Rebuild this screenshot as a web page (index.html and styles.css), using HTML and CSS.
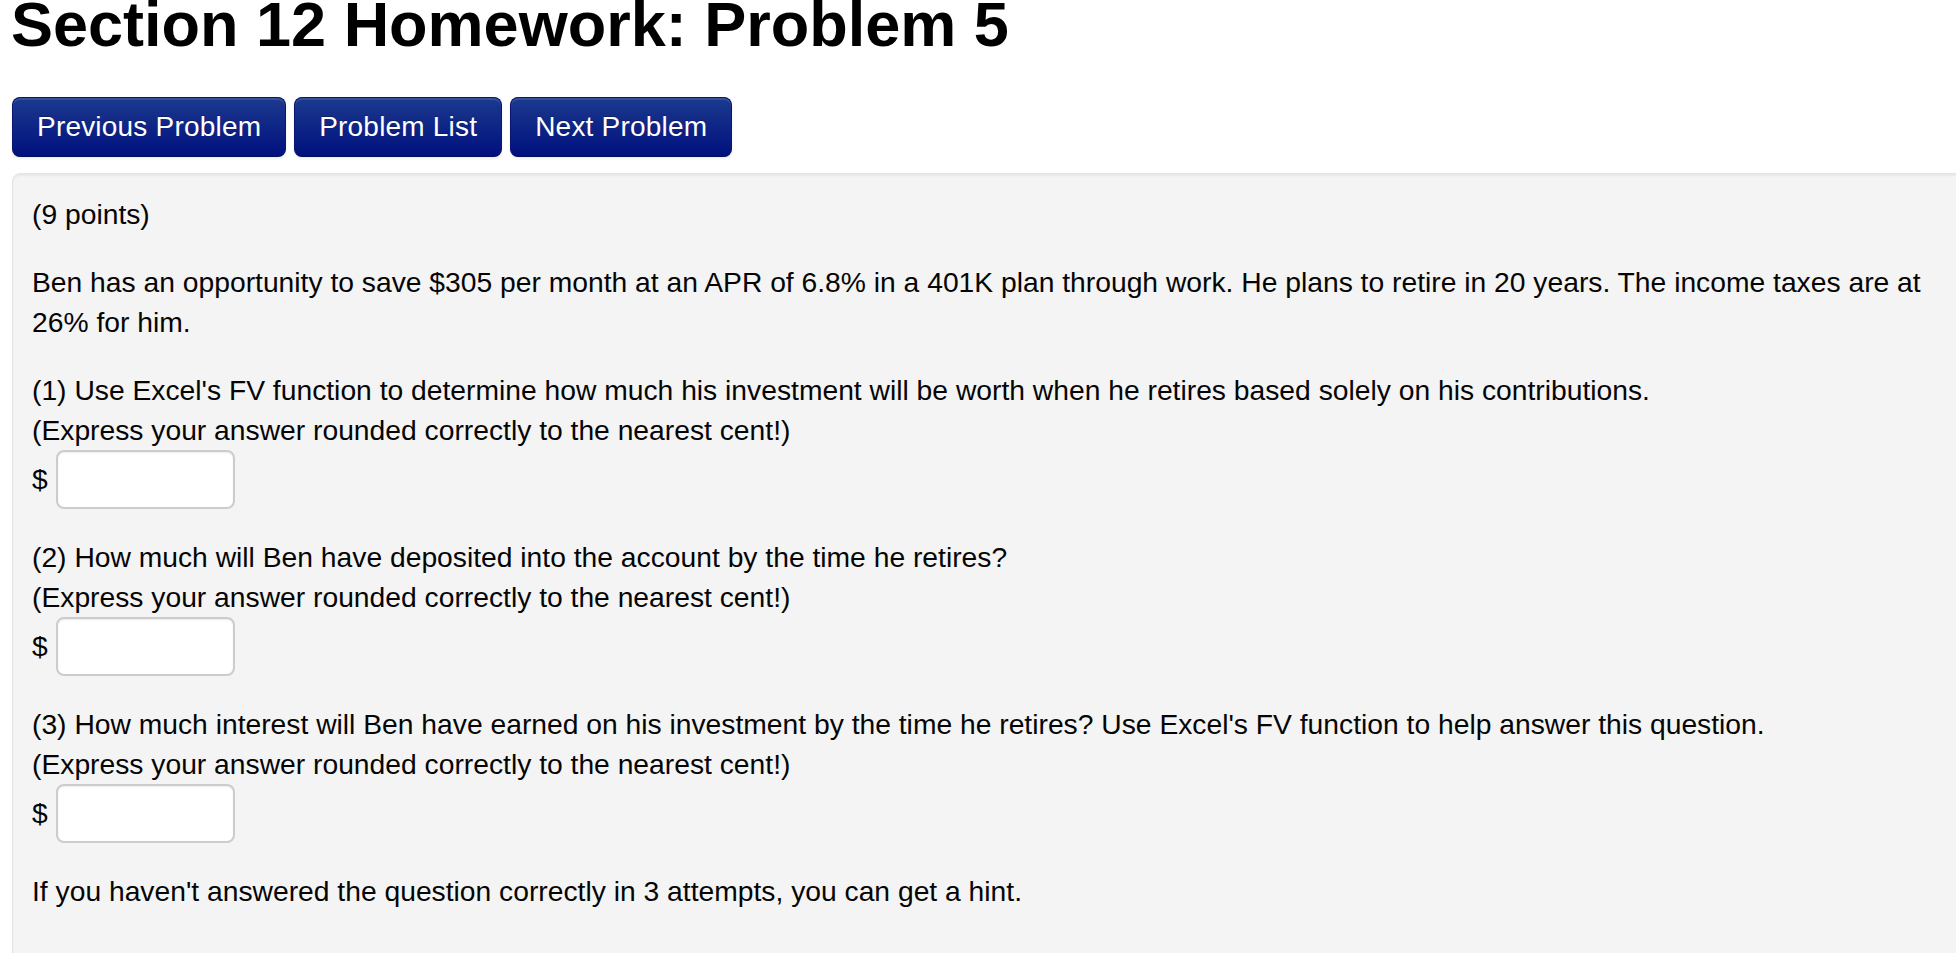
FILE: index.html
```html
<!DOCTYPE html>
<html lang="en">
<head>
<meta charset="utf-8">
<title>Section 12 Homework: Problem 5</title>
<link rel="stylesheet" href="styles.css">
</head>
<body>
<div class="page">
  <h1 class="title">Section 12 Homework: Problem 5</h1>
  <div class="nav">
    <a class="btn" href="#">Previous Problem</a>
    <a class="btn" href="#">Problem List</a>
    <a class="btn" href="#">Next Problem</a>
  </div>
  <div class="problem">
    <p class="par">(9 points)</p>
    <p class="par">Ben has an opportunity to save $305 per month at an APR of 6.8% in a 401K plan through work. He plans to retire in 20 years. The income taxes are at 26% for him.</p>
    <p class="par">(1) Use Excel's FV function to determine how much his investment will be worth when he retires based solely on his contributions.<br>(Express your answer rounded correctly to the nearest cent!)<br>$ <input class="answer" type="text"></p>
    <p class="par">(2) How much will Ben have deposited into the account by the time he retires?<br>(Express your answer rounded correctly to the nearest cent!)<br>$ <input class="answer" type="text"></p>
    <p class="par">(3) How much interest will Ben have earned on his investment by the time he retires? Use Excel's FV function to help answer this question.<br>(Express your answer rounded correctly to the nearest cent!)<br>$ <input class="answer" type="text"></p>
    <p class="par">If you haven't answered the question correctly in 3 attempts, you can get a hint.</p>
  </div>
</div>
</body>
</html>
```
FILE: styles.css
```css
html, body {
  margin: 0;
  padding: 0;
  background: #ffffff;
  overflow: hidden;
}

body {
  font-family: "Liberation Sans", Arial, Helvetica, sans-serif;
  font-size: 28.25px;
  line-height: 40px;
  color: #050505;
}

.page {
  padding-left: 12px;
}

.title {
  margin: -7px 0 42px -1px;
  font-size: 63px;
  line-height: 62px;
  font-weight: bold;
  color: #000000;
  white-space: nowrap;
}

.nav {
  display: flex;
  gap: 8px;
  margin-bottom: 16px;
}

.btn {
  display: inline-block;
  padding: 9px 24px;
  border: 1px solid #0a1670;
  border-bottom-color: #050e5e;
  border-radius: 8px;
  background-color: #0a2286;
  background-image: linear-gradient(to bottom, #1b3a8e 0%, #00107e 100%);
  box-shadow: inset 0 2px 0 rgba(255, 255, 255, 0.12), 0 2px 3px rgba(0, 0, 0, 0.08);
  color: #ffffff;
  text-decoration: none;
  text-shadow: 0 -1px 0 rgba(0, 0, 0, 0.25);
  font-size: 28px;
  line-height: 40px;
  letter-spacing: 0.2px;
  white-space: nowrap;
}

.problem {
  width: 1920px;
  min-height: 900px;
  padding: 20px 19px 19px 19px;
  background: #f4f4f4;
  border: 1px solid #e4e4e4;
  border-radius: 8px;
  box-shadow: inset 0 2px 2px rgba(0, 0, 0, 0.05);
}

.par {
  margin: 0 0 28px 0;
}

.answer {
  box-sizing: border-box;
  width: 179px;
  height: 59px;
  margin: 0;
  padding: 0 12px;
  border: 2px solid #cccccc;
  border-radius: 8px;
  background: #ffffff;
  box-shadow: inset 0 1px 2px rgba(0, 0, 0, 0.08);
  font-family: "Liberation Sans", Arial, sans-serif;
  font-size: 28px;
  color: #333333;
  vertical-align: baseline;
}
```
